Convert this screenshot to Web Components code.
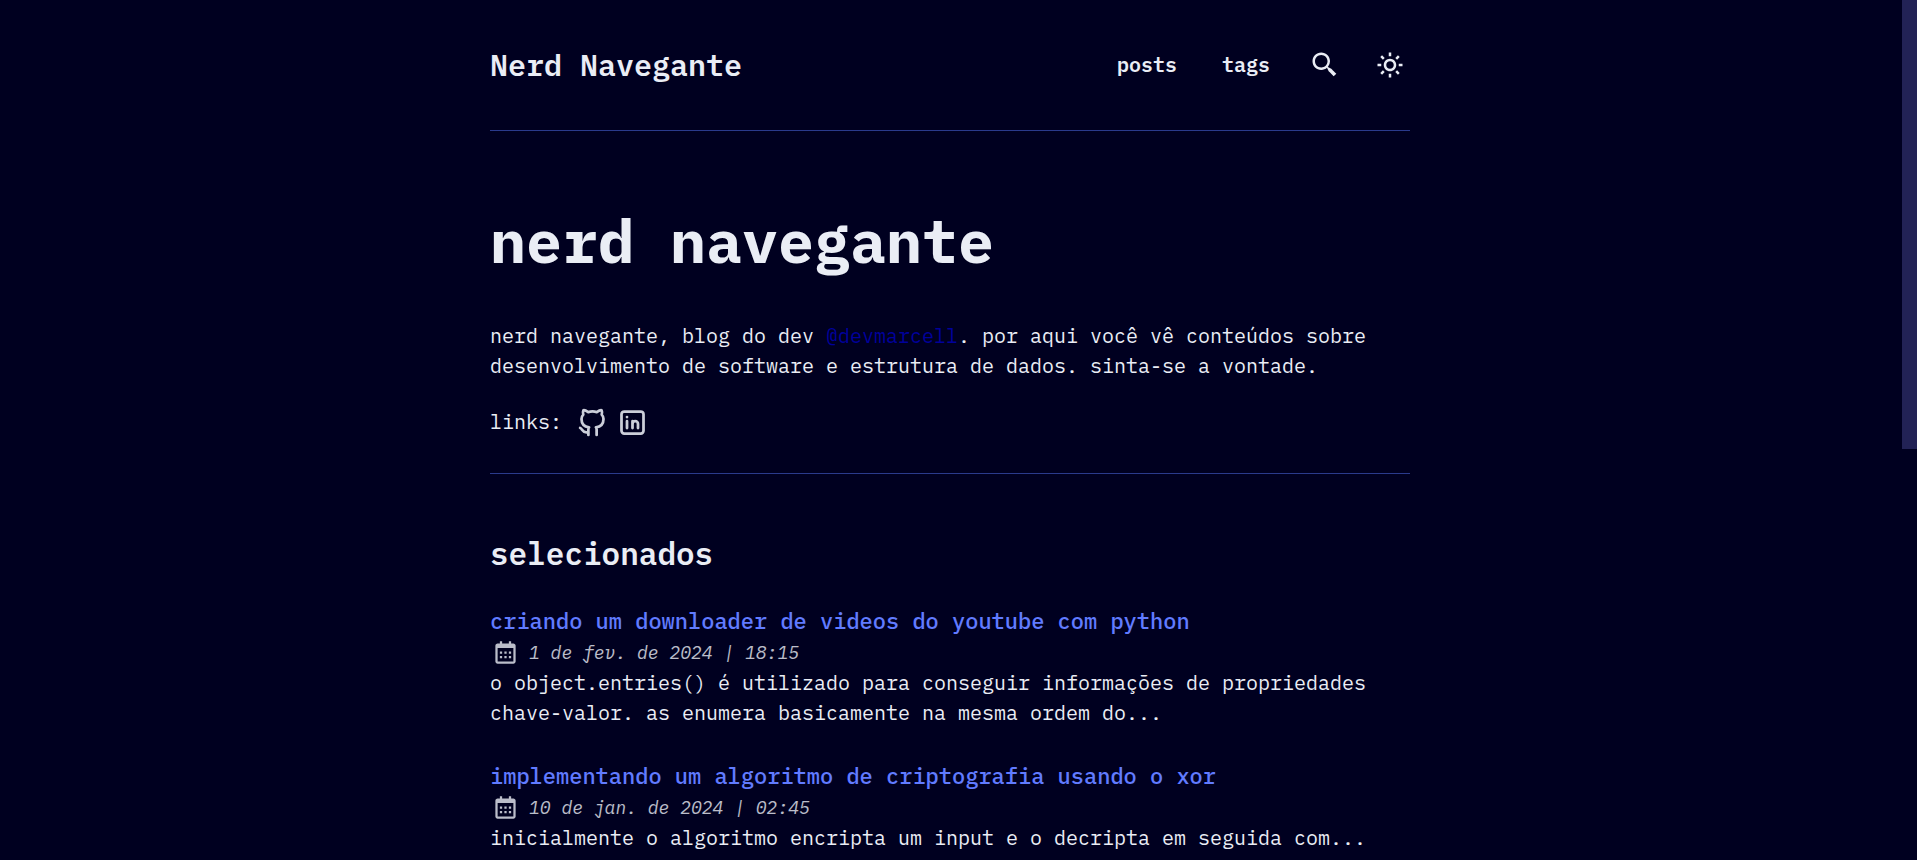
<!DOCTYPE html>
<html lang="pt-BR">
<head>
<meta charset="utf-8">
<meta name="viewport" content="width=device-width, initial-scale=1">
<title>Nerd Navegante</title>
<style>
  :root {
    --bg: #000020;
    --text: #eaedf5;
    --accent: #617bff;
    --link: #00009c;
    --line: #2a3a8c;
    --thumb: #222255;
  }
  body {
    margin: 0;
    background: var(--bg);
    color: var(--text);
    font: 20px/30px "IBM Plex Mono", "Liberation Mono", monospace;
  }
</style>
</head>
<body>
<blog-page>
  <site-header slot="header"></site-header>
  <blog-hero></blog-hero>
  <post-list heading="selecionados">
    <post-card heading="criando um downloader de videos do youtube com python" date="1 de fev. de 2024 | 18:15">o object.entries() é utilizado para conseguir informações de propriedades chave-valor. as enumera basicamente na mesma ordem do...</post-card>
    <post-card heading="implementando um algoritmo de criptografia usando o xor" date="10 de jan. de 2024 | 02:45">inicialmente o algoritmo encripta um input e o decripta em seguida com...</post-card>
  </post-list>
</blog-page>

<script>
const define = (name, render) => customElements.define(name, class extends HTMLElement {
  constructor() {
    super();
    this.attachShadow({ mode: "open" });
  }
  connectedCallback() {
    this.shadowRoot.innerHTML = render(this);
  }
});

define("blog-page", () => `
  <style>
    :host { display: grid; grid-template-columns: minmax(0, 1fr) 17px; min-height: 100vh; }
    .column { box-sizing: border-box; width: 100%; max-width: 920px; margin: 0 auto; }
    .rail { position: sticky; top: 0; height: 100vh; display: flex; justify-content: flex-end; }
    .thumb { width: 15px; height: 52.2%; background: var(--thumb); }
  </style>
  <div class="column"><slot name="header"></slot><main><slot></slot></main></div>
  <div class="rail" aria-hidden="true"><div class="thumb"></div></div>`);

define("site-header", () => `
  <style>
    :host { display: block; border-bottom: 1px solid var(--line); }
    header { display: flex; justify-content: space-between; align-items: center; height: 130px; }
    a { color: inherit; text-decoration: none; font-weight: 600; }
    .logo { font-size: 30px; line-height: 40px; }
    nav { display: flex; align-items: center; gap: 35px; padding-right: 5px; }
    .texts { display: flex; gap: 45px; padding-right: 5px; }
    button { display: block; padding: 0; border: 0; background: none; color: inherit; cursor: pointer; }
    svg { display: block; width: 30px; height: 30px; fill: currentColor; }
  </style>
  <header>
    <a class="logo" href="#">Nerd Navegante</a>
    <nav>
      <div class="texts"><a href="#posts">posts</a><a href="#tags">tags</a></div>
      <button type="button" aria-label="buscar"><svg viewBox="0 0 24 24"><path d="M19.023 16.977a35.13 35.13 0 0 1-1.367-1.384c-.372-.378-.596-.653-.596-.653l-2.8-1.337A6.962 6.962 0 0 0 16 9c0-3.859-3.14-7-7-7S2 5.141 2 9s3.14 7 7 7c1.763 0 3.37-.66 4.603-1.739l1.337 2.8s.275.224.653.596c.387.363.896.854 1.384 1.367l1.358 1.392.604.646 2.121-2.121-.646-.604c-.379-.372-.885-.866-1.391-1.36zM9 14c-2.757 0-5-2.243-5-5s2.243-5 5-5 5 2.243 5 5-2.243 5-5 5z"/></svg></button>
      <button type="button" aria-label="alternar tema"><svg viewBox="0 0 24 24"><path d="M6.993 12c0 2.761 2.246 5.007 5.007 5.007s5.007-2.246 5.007-5.007S14.761 6.993 12 6.993 6.993 9.239 6.993 12zM12 8.993c1.658 0 3.007 1.349 3.007 3.007S13.658 15.007 12 15.007 8.993 13.658 8.993 12 10.342 8.993 12 8.993zM10.998 19h2v3h-2zm0-17h2v3h-2zm-9 9h3v2h-3zm17 0h3v2h-3zM4.219 18.363l2.12-2.122 1.415 1.414-2.12 2.122zM16.24 6.344l2.122-2.122 1.414 1.414-2.122 2.122zM6.342 7.759 4.22 5.637l1.415-1.414 2.12 2.122zm13.434 10.605-1.414 1.414-2.122-2.122 1.414-1.414z"/></svg></button>
    </nav>
  </header>`);

define("blog-hero", () => `
  <style>
    :host { display: block; padding: 75px 0 35px; border-bottom: 1px solid var(--line); }
    h1 { margin: 0 0 45px; font-size: 60px; line-height: 70px; font-weight: 700; }
    p { margin: 0 0 25px; }
    p a { color: var(--link); text-decoration: none; }
    .links { display: flex; align-items: center; height: 32px; }
    .links span { padding-right: 14px; }
    .icons { display: flex; gap: 7px; }
    .icons a { color: inherit; opacity: .87; }
    svg { display: block; width: 33px; height: 33px; fill: none; stroke: currentColor; stroke-width: 2; stroke-linecap: round; stroke-linejoin: round; }
  </style>
  <h1>nerd navegante</h1>
  <p>nerd navegante, blog do dev <a href="#devmarcell">@devmarcell</a>. por aqui você vê conteúdos sobre desenvolvimento de software e estrutura de dados. sinta-se a vontade.</p>
  <div class="links"><span>links:</span>
    <div class="icons">
      <a href="#github" aria-label="GitHub"><svg viewBox="0 0 24 24"><path d="M9 19c-4.3 1.4 -4.3 -2.5 -6 -3m12 5v-3.5c0 -1 .1 -1.4 -.5 -2c2.8 -.3 5.5 -1.4 5.5 -6a4.6 4.6 0 0 0 -1.3 -3.2a4.2 4.2 0 0 0 -.1 -3.2s-1.1 -.3 -3.5 1.3a12.3 12.3 0 0 0 -6.2 0c-2.4 -1.6 -3.5 -1.3 -3.5 -1.3a4.2 4.2 0 0 0 -.1 3.2a4.6 4.6 0 0 0 -1.3 3.2c0 4.6 2.7 5.7 5.5 6c-.6 .6 -.6 1.2 -.5 2v3.5"/></svg></a>
      <a href="#linkedin" aria-label="LinkedIn"><svg viewBox="0 0 24 24"><rect x="4" y="4" width="16" height="16" rx="2"/><path d="M8 11v5M8 8v.01M12 16v-5M16 16v-3a2 2 0 0 0-4 0"/></svg></a>
    </div>
  </div>`);

define("post-list", el => `
  <style>
    :host { display: block; padding: 60px 0 32px; }
    h2 { margin: 0 0 31px; font-size: 31px; line-height: 40px; font-weight: 600; }
    .posts { display: grid; gap: 32px; }
  </style>
  <section><h2>${el.getAttribute("heading")}</h2><div class="posts"><slot></slot></div></section>`);

define("post-card", el => `
  <style>
    :host { display: block; }
    h3 { margin: 0; font-size: 22px; line-height: 32px; font-weight: 500; }
    h3 a { color: var(--accent); text-decoration: none; }
    .date { display: flex; align-items: center; gap: 10px; height: 31px; padding-left: 2px; font-size: 18px; font-style: italic; opacity: .8; }
    svg { width: 27px; height: 27px; fill: currentColor; }
    p { margin: 0; }
  </style>
  <article>
    <h3><a href="#post">${el.getAttribute("heading")}</a></h3>
    <div class="date"><svg viewBox="0 0 24 24" aria-hidden="true"><path d="M7 11h2v2H7zm0 4h2v2H7zm4-4h2v2h-2zm0 4h2v2h-2zm4-4h2v2h-2zm0 4h2v2h-2z"/><path d="M5 22h14c1.103 0 2-.897 2-2V6c0-1.103-.897-2-2-2h-2V2h-2v2H9V2H7v2H5c-1.103 0-2 .897-2 2v14c0 1.103.897 2 2 2zM19 8l.001 12H5V8h14z"/></svg><time>${el.getAttribute("date")}</time></div>
    <p><slot></slot></p>
  </article>`);
</script>
</body>
</html>
